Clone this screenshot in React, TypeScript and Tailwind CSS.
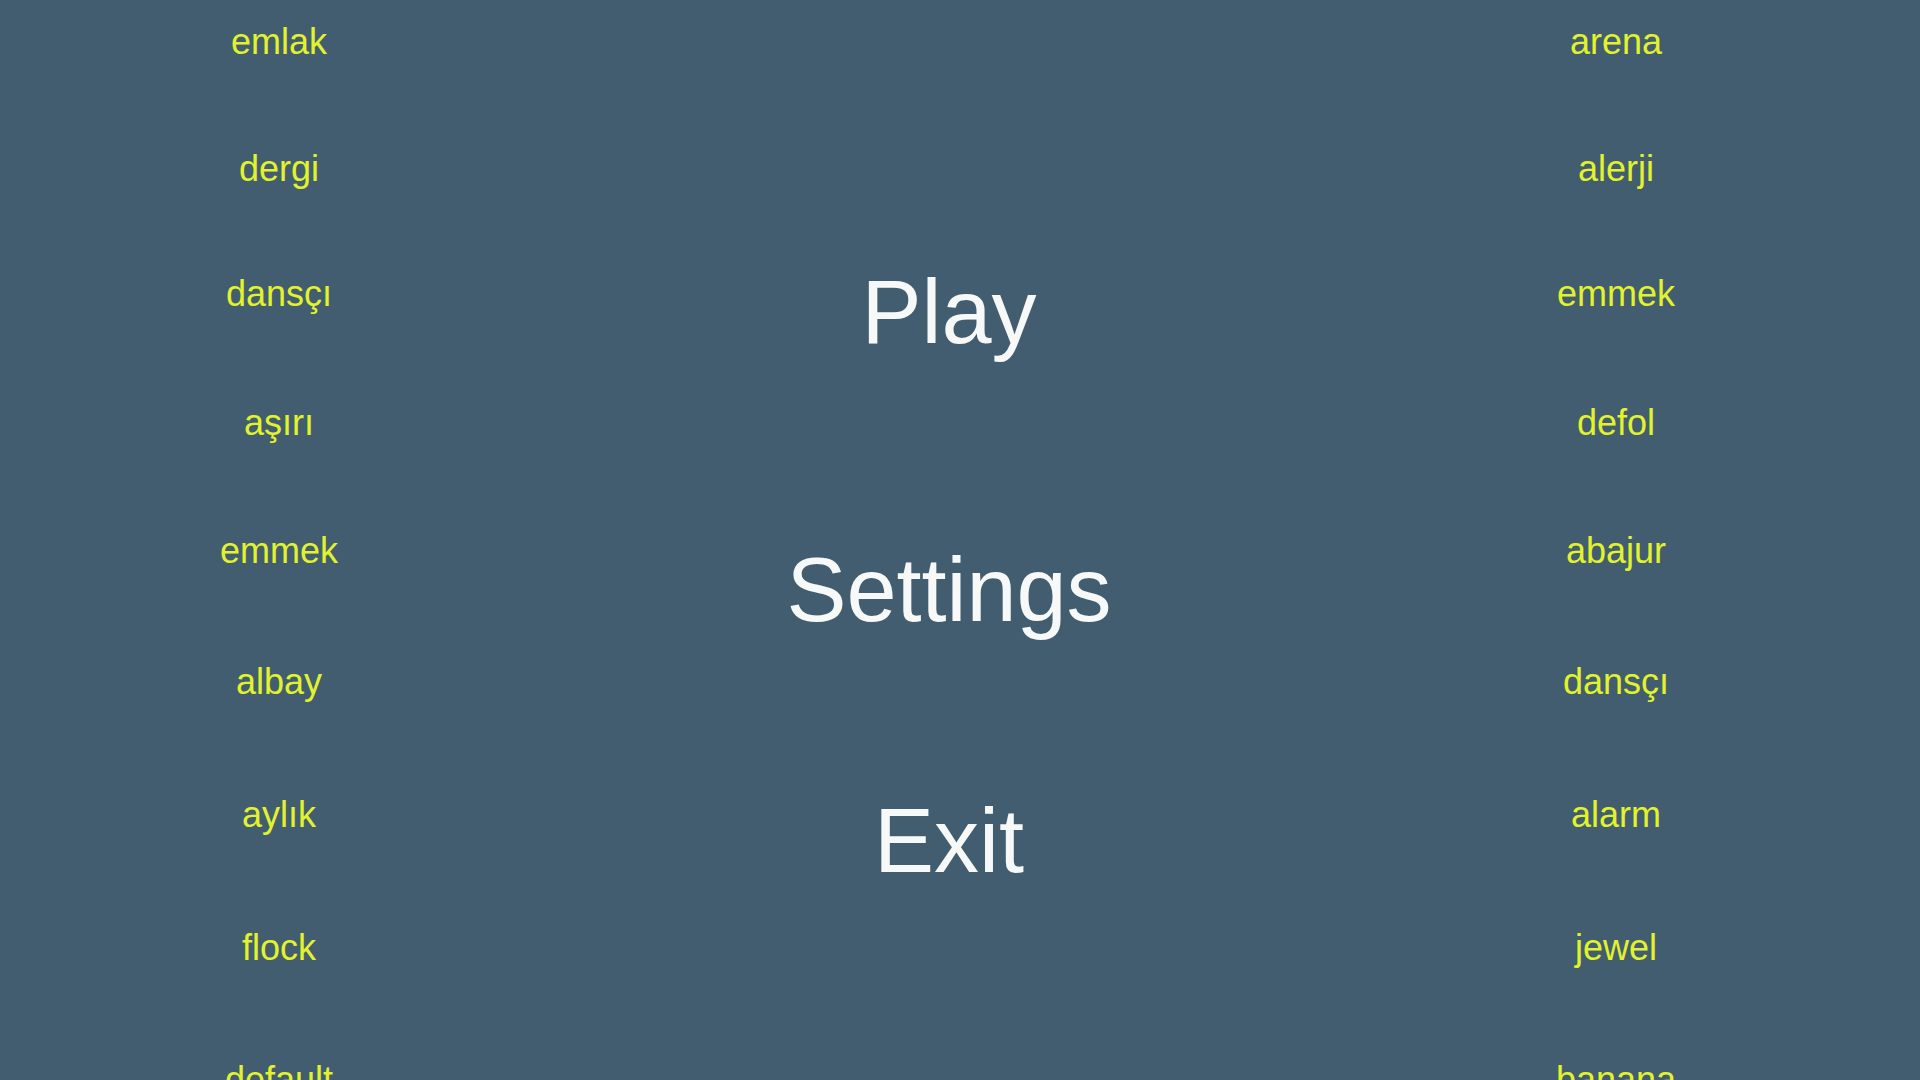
// row heights follow the uneven spacing of the word lists
const rows = [
  { left: "emlak", right: "arena", h: "h-[127px]" },
  { left: "dergi", right: "alerji", h: "h-[125px]" },
  { left: "dansçı", right: "emmek", h: "h-[129px]" },
  { left: "aşırı", right: "defol", h: "h-[128px]" },
  { left: "emmek", right: "abajur", h: "h-[131px]" },
  { left: "albay", right: "dansçı", h: "h-[133px]" },
  { left: "aylık", right: "alarm", h: "h-[133px]" },
  { left: "flock", right: "jewel", h: "h-[132px]" },
  { left: "default", right: "banana", h: "h-[132px]" },
];

function WordColumn({ side }: { side: "left" | "right" }) {
  return (
    <div className="flex flex-col items-center pt-[24px]">
      {rows.map((r, i) => (
        <div key={i} className={`${r.h} shrink-0 text-[36px] leading-none text-[#e2f22c]`}>
          {side === "left" ? r.left : r.right}
        </div>
      ))}
    </div>
  );
}

export default function App() {
  return (
    <div
      className="grid h-[1080px] w-[1920px] grid-cols-[558px_782px_552px] overflow-hidden bg-[#415d6f]"
      style={{ fontFamily: '"Liberation Sans", Arial, sans-serif' }}
    >
      <WordColumn side="left" />
      <div className="flex flex-col items-center text-[90px] leading-none text-[#f7f8f8]">
        <div className="mt-[267px] cursor-pointer">Play</div>
        <div className="mt-[188px] cursor-pointer">Settings</div>
        <div className="mt-[161px] cursor-pointer">Exit</div>
      </div>
      <WordColumn side="right" />
    </div>
  );
}
